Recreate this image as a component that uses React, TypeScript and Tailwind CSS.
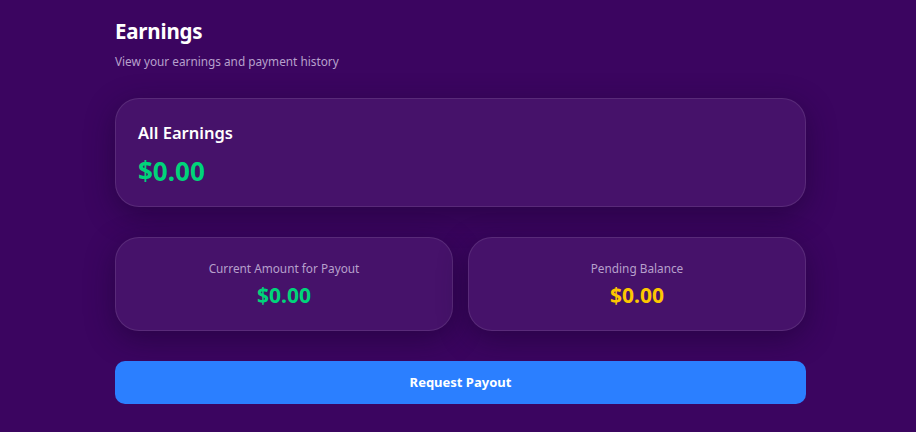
import React from "react";

const font = { fontFamily: '"Noto Sans", "Open Sans", sans-serif' };

const StatCard = ({ label, amount, color }: { label: string; amount: string; color: string }) => (
    <div className="flex-1 h-[94px] rounded-[24px] border border-white/10 bg-[#46126a] shadow-[0_8px_30px_rgba(20,0,40,0.45)] flex flex-col items-center justify-center">
        <span className="text-[11.8px] text-[#b7a0cc] leading-none mt-[1px]">{label}</span>
        <span className={`mt-[10px] text-[21px] font-bold leading-none ${color}`}>{amount}</span>
    </div>
);

export default function App() {
    return (
        <div className="min-h-[432px] w-full bg-[#3b0560]" style={font}>
            <div className="ml-[115px] w-[691px] pt-[17px]">
                <h1 className="text-[20.5px] font-bold text-white leading-[28px] tracking-[-0.2px]">Earnings</h1>
                <p className="mt-[8px] text-[11.8px] text-[#b7a0cc] leading-[16px]">View your earnings and payment history</p>

                <div className="mt-[29px] h-[109px] rounded-[24px] border border-white/10 bg-[#46126a] shadow-[0_8px_30px_rgba(20,0,40,0.45)] px-[22px] pt-[22px]">
                    <div className="text-[16.5px] font-semibold text-white leading-[24px]">All Earnings</div>
                    <div className="mt-[10px] text-[26px] font-bold text-[#00d47a] leading-[32px]">$0.00</div>
                </div>

                <div className="mt-[30px] flex gap-[15px]">
                    <StatCard label="Current Amount for Payout" amount="$0.00" color="text-[#00d47a]" />
                    <StatCard label="Pending Balance" amount="$0.00" color="text-[#fdc700]" />
                </div>

                <button className="mt-[30px] w-full h-[43px] rounded-[10px] bg-[#2b7fff] text-white text-[13px] font-bold">
                    Request Payout
                </button>
            </div>
        </div>
    );
}
